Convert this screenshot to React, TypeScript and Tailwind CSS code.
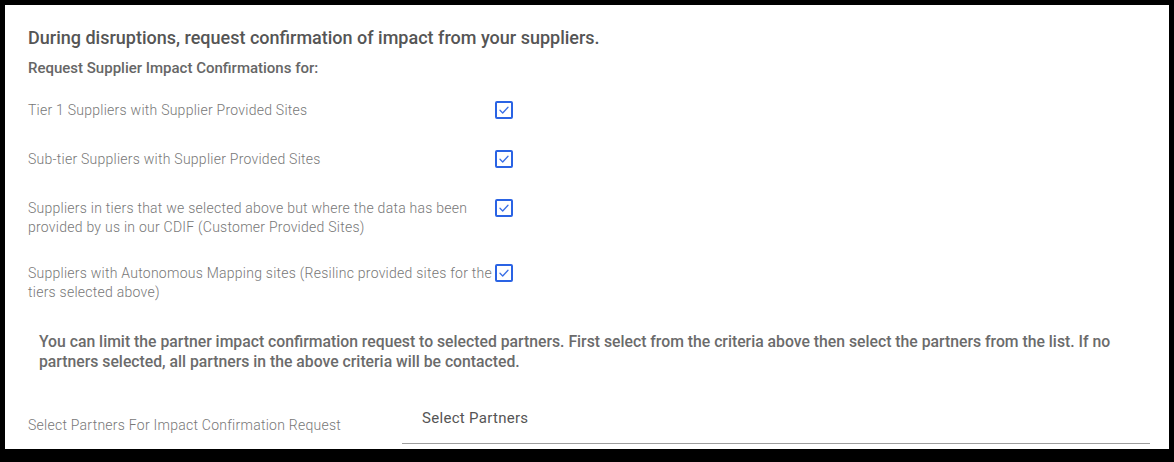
const rows = [
  { label: 'Tier 1 Suppliers with Supplier Provided Sites', gap: 'mt-0' },
  { label: 'Sub-tier Suppliers with Supplier Provided Sites', gap: 'mt-[30px]' },
  {
    label:
      'Suppliers in tiers that we selected above but where the data has been provided by us in our CDIF (Customer Provided Sites)',
    gap: 'mt-[30px]',
  },
  {
    label:
      'Suppliers with Autonomous Mapping sites (Resilinc provided sites for the tiers selected above)',
    gap: 'mt-[27px]',
  },
];

function CheckBox() {
  return (
    <span className="flex h-[18px] w-[18px] shrink-0 items-center justify-center rounded-[2px] border-2 border-[#2a63e4] bg-white">
      <svg width="12" height="12" viewBox="0 0 12 12" fill="none">
        <path d="M2 6.3 L4.7 9 L10 3.2" stroke="#3a6fe6" strokeWidth="1.3" strokeLinecap="round" strokeLinejoin="round" />
      </svg>
    </span>
  );
}

export default function App() {
  return (
    <div className="min-h-[462px] bg-black pt-[5px] pl-[5px]" style={{ fontFamily: 'Roboto, "Liberation Sans", sans-serif' }}>
      <div className="h-[444px] w-[1164px] overflow-hidden bg-white pt-[21px] pl-[23px]">
        <h2 className="text-[18px] font-medium leading-6 text-[#555]">
          During disruptions, request confirmation of impact from your suppliers.
        </h2>
        <p className="mt-[8px] text-[15px] font-medium leading-5 text-[#666]">
          Request Supplier Impact Confirmations for:
        </p>

        <div className="mt-[23px] flex flex-col">
          {rows.map((row) => (
            <div key={row.label} className={`flex items-start ${row.gap}`}>
              <span className="w-[467px] text-[14px] font-light leading-[19px] tracking-[0.25px] text-[#777]">
                {row.label}
              </span>
              <CheckBox />
            </div>
          ))}
        </div>

        <p className="mt-[30px] pl-[11px] pr-[19px] text-[15.75px] font-medium leading-5 text-[#6b6b6b]">
          You can limit the partner impact confirmation request to selected partners. First select from the criteria above
          then select the partners from the list. If no partners selected, all partners in the above criteria will be
          contacted.
        </p>

        <div className="mt-[34px] flex items-start">
          <span className="mt-[9px] w-[374px] text-[14px] font-light leading-5 tracking-[0.25px] text-[#777]">
            Select Partners For Impact Confirmation Request
          </span>
          <div className="w-[748px] border-b border-[#9e9e9e] pb-[13px] pl-[20px]">
            <span className="text-[15px] leading-6 tracking-[0.3px] text-[#555]">Select Partners</span>
          </div>
        </div>
      </div>
    </div>
  );
}
